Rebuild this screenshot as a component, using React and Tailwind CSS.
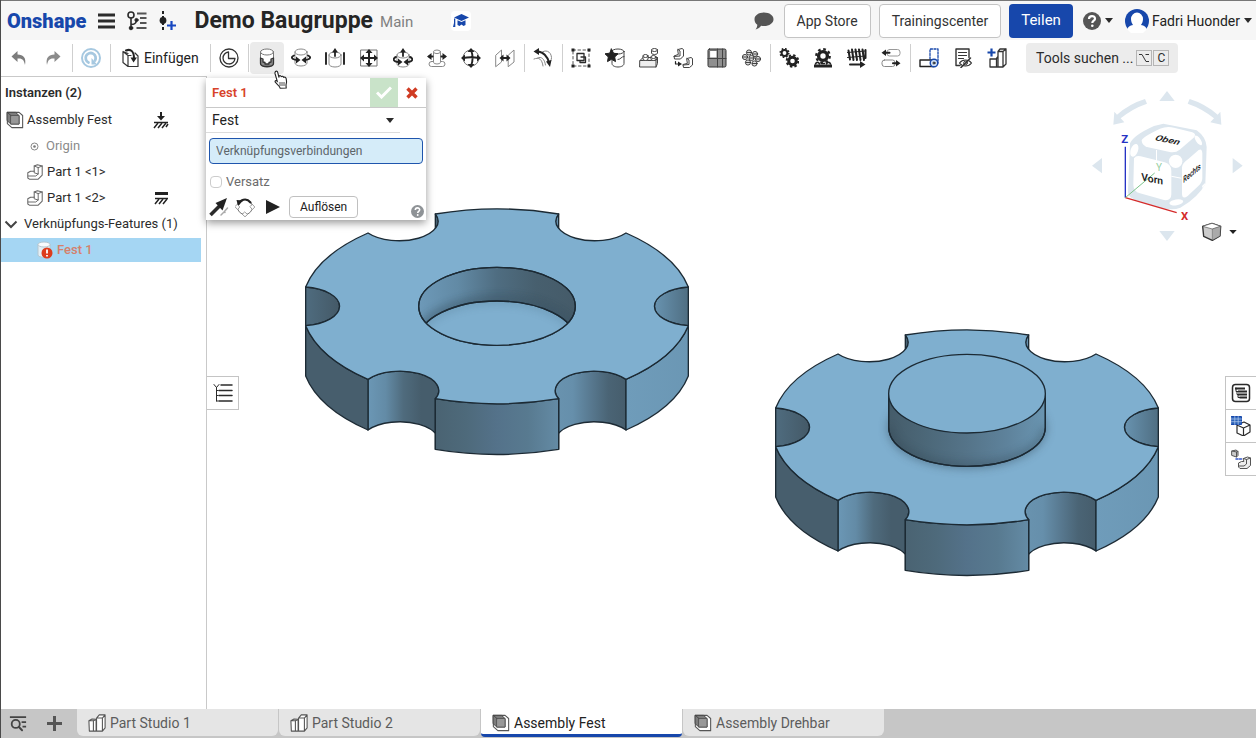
import React from "react";

function Svg({ size = 20, children, label, className = "" }) {
  return (
    <svg
      width={size}
      height={size}
      viewBox="0 0 20 20"
      fill="none"
      stroke="#2b2b2b"
      strokeWidth="1"
      strokeLinecap="round"
      strokeLinejoin="round"
      className={"shrink-0 " + className}
      role={label ? "img" : undefined}
      aria-label={label}
      aria-hidden={label ? undefined : true}
    >
      {children}
    </svg>
  );
}

const Caret = () => (
  <svg width="8" height="5" viewBox="0 0 8 5" aria-hidden="true" className="shrink-0">
    <path d="M0 0h8L4 5z" fill="#2b2b2b" />
  </svg>
);

const dark = "#222222";
const blue = "#1747ab";

function Cylinder({ x = 3, y = 1, w = 14, h = 17, r = 3, stroke = "#8a8a8a", fill = "#fff" }) {
  return (
    <g stroke={stroke} fill={fill}>
      <path d={`M${x} ${y + r}v${h - 2 * r}a${w / 2} ${r} 0 0 0 ${w} 0v${-(h - 2 * r)}`} />
      <ellipse cx={x + w / 2} cy={y + r} rx={w / 2} ry={r} />
    </g>
  );
}

const icons = {
  undo: (
    <path d="M8.500 3L2.500 8.500l6 5.500v-3.500c5-.5 6.500 1.500 7.500 6.500 1.500-7-1.500-10.500-7.500-10.500z" fill="#7d7d7d" stroke="none" />
  ),
  redo: (
    <path d="M11.500 3l6 5.500-6 5.500v-3.500c-5-.5-6.500 1.500-7.500 6.500-1.500-7 1.500-10.500 7.500-10.500z" fill="#8b8b8b" stroke="none" />
  ),
  refresh: (
    <g stroke="#a6c8e0">
      <circle cx="10" cy="10" r="9" strokeWidth="2" />
      <path d="M7.500 14.500A5 5 0 1 1 14 12.500" strokeWidth="2.800" />
      <path d="M10.500 10v6.500h5.500z" fill="#a6c8e0" stroke="none" />
    </g>
  ),
  insert: (
    <g stroke="#333" strokeWidth="1.200">
      <path d="M8 5.500L3 3.500v11L8 18.500h10V8l-3-3M3 3.500l5 4v11M8 7.500h3" />
      <path d="M6 2.500c5-2 8 1 8 8" strokeWidth="2" stroke={dark} />
      <path d="M10.500 9.500h6.500L13.500 14.500z" fill={dark} stroke="none" />
    </g>
  ),
  clock: (
    <g stroke="#333" strokeWidth="1.300">
      <circle cx="10" cy="10" r="9" />
      <path d="M9.500 4a6 6 0 1 0 6.500 6.500H9.500z" />
    </g>
  ),
  fastened: (
    <g>
      <Cylinder x={3.500} y={1} w={13} h={18} stroke="#777" />
      <path d="M3.500 10v5.500c0 1.800 2.800 3 6.500 3s6.500-1.200 6.500-3V10l-2.500 1v3l-2 .5v1.500h-4v-1.500l-2-.5v-3z" fill="#8b8b8b" stroke="#333" strokeWidth="1.300" />
    </g>
  ),
  revolute: (
    <g>
      <Cylinder x={4} y={1} w={12} h={17} />
      <path d="M3 7.500C-.5 9 .5 11.500 6 12M17 7.500c3.500 1.500 2.500 4-3 4.500" stroke={dark} strokeWidth="1.900" />
      <path d="M5 8.500l4.500 3.500L5 15.500zM15 8.500L10.500 12l4.500 3.500z" fill={dark} stroke="none" />
    </g>
  ),
  slider: (
    <g>
      <Cylinder x={4} y={4} w={12} h={15} />
      <path d="M1 5v11M19 5v11" stroke={dark} strokeWidth="1.900" />
      <path d="M10 8V3" stroke={dark} strokeWidth="1.800" />
      <path d="M7 4.500L10 0l3 4.500z" fill={dark} stroke="none" />
    </g>
  ),
  planar: (
    <g>
      <rect x="2" y="2" width="16" height="16" stroke="#777" />
      <path d="M10 3v14M3 10h14" stroke={dark} strokeWidth="2" />
      <path d="M6.500 5L10 1l3.500 4zM6.500 15l3.500 4 3.500-4zM5 6.500L1 10l4 3.500zM15 6.500l4 3.500-4 3.500z" fill={dark} stroke="none" />
    </g>
  ),
  cylindrical: (
    <g>
      <Cylinder x={4} y={4} w={12} h={15} />
      <path d="M3 9C-1 10.500.5 14 5.500 14M17 9c4 1.500 2.500 5-2.500 5" stroke={dark} strokeWidth="1.900" />
      <path d="M5 10.500L9.500 14 5 17.500zM15 10.500L10.500 14l4.500 3.500zM7 4.500L10 0l3 4.500z" fill={dark} stroke="none" />
      <path d="M10 8V3" stroke={dark} strokeWidth="1.800" />
    </g>
  ),
  pinslot: (
    <g>
      <rect x="2" y="13.500" width="16" height="5" rx="2.500" stroke="#888" fill="#fff" />
      <Cylinder x={6.500} y={2} w={7} h={14} r={1.800} />
      <path d="M5.500 8.500H2.500M14.500 8.500h3" stroke={dark} strokeWidth="2" />
      <path d="M4.500 5l-4.500 3.500L4.500 12zM15.500 5l4.500 3.500-4.500 3.500z" fill={dark} stroke="none" />
    </g>
  ),
  ball: (
    <g>
      <circle cx="10" cy="10" r="8" stroke="#777" />
      <path d="M10 2c2 5 2 11 0 16M2 10c5-1 11-1 16 0" stroke={dark} strokeWidth="1.900" />
      <path d="M6.500 4L10 0l3.500 4zM6.500 16l3.500 4 3.500-4zM4 6.500L0 10l4 3.500zM16 6.500l4 3.500-4 3.500z" fill={dark} stroke="none" />
    </g>
  ),
  parallel: (
    <g>
      <path d="M1 7l5.500-5v12L1 18.500zM13.500 7L19 2v12l-5.500 4.500z" stroke="#888" />
      <path d="M7 10h6" stroke={dark} strokeWidth="2" />
      <path d="M8.500 6.500L4.500 10l4 3.500zM11.500 6.500l4 3.500-4 3.500z" fill={dark} stroke="none" />
    </g>
  ),
  tangent: (
    <g>
      <path d="M1 11c5-2 8 0 9 7M8 5c4-4 10-2 10.500 4.500 0 3-1.500 4.500-2.500 5M4.500 10c4-2 7 1 8 7" stroke="#888" />
      <path d="M4.500 3.500c5.500 0 10 5 11.500 11" stroke={dark} strokeWidth="2" />
      <path d="M6 0L.5 3.500 6 7zM13 13.500l4 5.500 1.500-7z" fill={dark} stroke="none" />
    </g>
  ),
  group: (
    <g>
      <rect x="2" y="2" width="16" height="16" strokeDasharray="2.500 2.500" stroke="#555" />
      <path d="M6 5.500h7v7H6zM10 9h4.500v5.500H9v-2" strokeWidth="1.300" />
      <path d="M.5.500h3v3h-3zM16.500.500h3v3h-3zM.5 16.500h3v3h-3zM16.500 16.500h3v3h-3z" fill={dark} stroke="none" />
    </g>
  ),
  mateConnector: (
    <g>
      <path d="M7 3.500v12c0 2 2.500 3.500 6 3.500s6-1.500 6-3.500v-12" stroke="#444" />
      <ellipse cx="13" cy="3.500" rx="6" ry="2.500" stroke="#444" fill="#fff" />
      <path d="M19 8.500c-3 0-3 3-6 3" stroke="#444" />
      <path d="M6.500 1l2 4.200 4.500.6-3.300 3.200.8 4.600-4-2.300-4 2.300.8-4.600L0 5.800l4.500-.6z" fill={dark} stroke={dark} />
    </g>
  ),
  replicate: (
    <g stroke="#444">
      <path d="M1 12.500l3-3h14.500v6L17 19H1zM1 12.500h16V19M17 12.500l1.500-3" fill="#eee" />
      <Cylinder x={4} y={6.500} w={5} h={6} r={1.500} stroke="#444" />
      <Cylinder x={12.500} y={.5} w={6} h={6} r={1.500} stroke="#444" />
      <Cylinder x={12} y={7.500} w={5} h={5} r={1.500} stroke="#444" />
    </g>
  ),
  patternLinear: (
    <g stroke="#444">
      <path d="M5 1.500L9 .5l1.500 1v6.500l-3 3H1.500l-.5-3L5 6.500z" fill="#fff" />
      <path d="M14 10.500l4-1 1.500 1V17l-3 2.500h-6l-.5-3 4-1z" fill="#fff" />
      <path d="M5 1.500l2 1.500v5l-6 .5M14 10.500l2 1.500v4.500l-6 .5" />
      <path d="M2.500 13.500v2.500h3" strokeWidth="1.200" stroke={dark} />
      <path d="M5 13.500l4 2.500-4 2.500z" fill={dark} stroke="none" />
    </g>
  ),
  layout: (
    <g stroke="#333">
      <rect x="1" y="1" width="18" height="18" rx="1.500" fill="#8f8f8f" />
      <rect x="3" y="2.500" width="7" height="7.500" fill="#fff" stroke="#777" />
      <path d="M10.500 1v18M1 10.500h18M15.500 1v18" stroke="#444" />
    </g>
  ),
  pattern: (
    <g stroke="#333" fill="#ddd" strokeWidth=".9">
      {[[8, 4.500], [14, 6], [4, 9], [10.500, 10], [17, 11], [7, 14.500], [13.500, 15.500]].map(([x, y]) => (
        <g key={x}>
          <circle cx={x} cy={y} r="2.600" />
          <path d={`M${x - 2} ${y}h4`} />
        </g>
      ))}
    </g>
  ),
  gears: (
    <g>
      <circle cx="5.500" cy="5" r="2.900" strokeWidth="2" stroke={dark} />
      <circle cx="5.500" cy="5" r="4.300" strokeWidth="1.600" strokeDasharray="1.600 1.780" strokeLinecap="butt" stroke={dark} />
      <circle cx="13.500" cy="13" r="3.800" strokeWidth="3" stroke={dark} />
      <circle cx="13.500" cy="13" r="5.800" strokeWidth="2" strokeDasharray="2.400 2.150" strokeLinecap="butt" stroke={dark} />
    </g>
  ),
  rack: (
    <g stroke={dark}>
      <circle cx="10" cy="8" r="4.400" strokeWidth="3.400" />
      <circle cx="10" cy="8" r="6.800" strokeWidth="2.200" strokeDasharray="2.700 2.640" strokeLinecap="butt" />
      <path d="M1 18h18" strokeWidth="3" strokeLinecap="butt" />
      <path d="M2.500 16l1-1.500h2l1 1.500M13.500 16l1-1.500h2l1 1.500M8.500 15.500h3" strokeWidth="1.500" />
    </g>
  ),
  screw: (
    <g stroke={dark}>
      <path d="M1.500 2.500l1.500 9M5 1.500l1.500 10.500M8.500 1.500L10 12M12 1.500L13.500 12M15.500 1.500L17 12M18.500 2v8" strokeWidth="2" />
      <path d="M.5 4.500l18-1.500M.5 9.500l18-1.500" />
      <path d="M3 16.500h11" strokeWidth="2" />
      <path d="M13 13l5.500 3.500-5.500 3.500z" fill={dark} stroke="none" />
    </g>
  ),
  linear: (
    <g>
      <rect x="6" y="1.500" width="13" height="6.500" rx="2.500" stroke="#999" />
      <rect x="1" y="12" width="13" height="6.500" rx="2.500" stroke="#888" />
      <path d="M4 4.800h4.500M12 15.200h4" stroke={dark} strokeWidth="2" />
      <path d="M5 1.500L.5 4.800 5 8zM15 12l4.500 3.200L15 18.500z" fill={dark} stroke="none" />
    </g>
  ),
  section: (
    <g>
      <path d="M11 11V1h8v14" stroke={blue} strokeDasharray="2 1.500" strokeWidth="1.300" />
      <path d="M1 12h14v6.500H1z" stroke="#222" strokeWidth="1.400" />
      <circle cx="15" cy="15" r="3.800" fill="#cfe0f7" stroke={blue} strokeWidth="1.400" />
      <circle cx="15" cy="15" r="1" stroke={dark} />
    </g>
  ),
  hide: (
    <g stroke="#333">
      <path d="M7 17.500H3V1h13v8.500" strokeWidth="1.400" />
      <path d="M5.500 4.500h8M5.500 7.500h8M5.500 10.500h5" strokeWidth="1.200" />
      <path d="M6.500 15c3-4 9-4 12 0-3 4-9 4-12 0z" fill="#fff" strokeWidth="1.200" />
      <circle cx="12.500" cy="15" r="1.800" />
      <path d="M8 19.500l9.500-9.500" strokeWidth="1.500" />
    </g>
  ),
  addPart: (
    <g stroke="#333">
      <path d="M3 11v8h6.500v-8.500L11 8.500V7M9.500 19H11M11 19V3.500L13 1h6v15l-3 3zM11 3.500h5V19M16 3.500L19 1M3 11h6.500" strokeWidth="1.300" />
      <path d="M4.500.5v8M.5 4.500h8" stroke={blue} strokeWidth="2.200" strokeLinecap="butt" />
    </g>
  ),
};

const TOOL_GROUPS = [
  [["clock", "Zeit"]],
  [
    ["fastened", "Fest"],
    ["revolute", "Drehbar"],
    ["slider", "Schieber"],
    ["planar", "Planar"],
    ["cylindrical", "Zylindrisch"],
    ["pinslot", "Stift in Nut"],
    ["ball", "Kugel"],
    ["parallel", "Parallel"],
  ],
  [["tangent", "Tangential"]],
  [
    ["group", "Gruppe"],
    ["mateConnector", "Verknüpfungsverbindung"],
    ["replicate", "Replizieren"],
    ["patternLinear", "Lineares Muster"],
    ["layout", "Anordnung"],
    ["pattern", "Kreismuster"],
  ],
  [
    ["gears", "Zahnrad"],
    ["rack", "Zahnstange"],
    ["screw", "Schraube"],
    ["linear", "Lineare Beziehung"],
  ],
  [
    ["section", "Schnittansicht"],
    ["hide", "Ausblenden"],
    ["addPart", "Teil hinzufügen"],
  ],
];

const Separator = () => (
  <div className="flex h-7 w-1 shrink-0 justify-center">
    <div className="w-px bg-[#cfcfcf]" />
  </div>
);

function ToolButton({ icon, label, active }) {
  return (
    <button
      type="button"
      aria-label={label}
      className={
        active
          ? "flex h-8 w-[34px] shrink-0 items-center justify-center rounded bg-[#ebebeb]"
          : "flex h-8 w-[34px] shrink-0 items-center justify-center rounded"
      }
    >
      <Svg>{icons[icon]}</Svg>
    </button>
  );
}

function Header() {
  return (
    <header className="flex h-10 shrink-0 items-center border-t border-[#777] bg-[#f6f6f6] pr-1 pl-1.5">
      <a href="#home" className="text-[20px] leading-6 font-black text-[#1747ab]">
        Onshape
      </a>
      <button type="button" aria-label="Menü" className="ml-3">
        <svg width="17" height="16" viewBox="0 0 17 16" aria-hidden="true">
          <path d="M0 2h17M0 8h17M0 14h17" stroke="#2b2b2b" strokeWidth="3" />
        </svg>
      </button>
      <button type="button" aria-label="Versionen" className="ml-3">
        <Svg size={20}>
          <circle cx="4" cy="4" r="3" strokeWidth="1.600" />
          <path d="M4 7v9M4 13.500c5 0 5-2 5.500-4" strokeWidth="1.600" />
          <circle cx="4" cy="17" r="1.800" fill={dark} />
          <circle cx="9.500" cy="9" r="1.600" fill={dark} />
          <path d="M10 2.500h9.500M13 7h6.500M13 12h6.500M9.500 17h10" strokeWidth="1.900" stroke="#555" strokeLinecap="butt" />
        </Svg>
      </button>
      <button type="button" aria-label="Version erstellen" className="ml-3">
        <svg width="17" height="20" viewBox="0 0 17 20" aria-hidden="true">
          <path d="M4 0v3M4 5v2M4 12v2M4 16v3" stroke={dark} strokeWidth="2" />
          <circle cx="4" cy="9.500" r="3.400" fill={dark} />
          <path d="M12.500 10v9M8 14.500h9" stroke="#1747c0" strokeWidth="2.200" />
        </svg>
      </button>
      <h1 className="ml-[18px] text-[23px] leading-7 font-bold whitespace-nowrap text-[#252525]">Demo Baugruppe</h1>
      <span className="mt-1 ml-[7px] text-[15px] text-[#808080]">Main</span>
      <button type="button" aria-label="Lernzentrum" className="ml-[38px] rounded bg-white p-0.5">
        <svg width="16" height="16" viewBox="0 0 16 16" aria-hidden="true" fill={blue}>
          <path d="M8.500 1L16 4.500 8.500 8 1 4.500zM4.500 7.200l4 1.900 4-1.900V12l-2 1-2-1.500L6.500 13l-2-1zM1 5.500h1.300V14H0l1-4z" />
        </svg>
      </button>
      <div className="ml-auto flex items-center">
        <button type="button" aria-label="Kommentare" className="mr-2.5">
          <svg width="20" height="18" viewBox="0 0 20 18" aria-hidden="true" fill="#555">
            <path d="M10 .5c5.400 0 9.500 2.900 9.500 6.700S15.400 14 10 14c-1 0-2 0-2.900-.3C5.500 15.800 3.500 17 1.500 17.500c1.200-1.400 1.800-3 1.800-4.800C1.500 11.400.5 9.500.5 7.200.5 3.400 4.600.5 10 .5z" />
          </svg>
        </button>
        <button type="button" className="h-[34px] rounded border border-[#c4c4c4] bg-white px-3 text-sm text-[#333]">App Store</button>
        <button type="button" className="ml-2 h-[34px] rounded border border-[#c4c4c4] bg-white px-3 text-sm text-[#333]">Trainingscenter</button>
        <button type="button" className="ml-2 h-[34px] rounded bg-[#1747ab] px-3 text-[15px] text-white">Teilen</button>
        <button type="button" aria-label="Hilfe" className="ml-2.5 flex items-center gap-1">
          <svg width="18" height="18" viewBox="0 0 18 18" aria-hidden="true">
            <circle cx="9" cy="9" r="9" fill="#555" />
            <path d="M6 7c0-4 6-3.800 6-.3 0 2-2.700 2-2.700 4.300" fill="none" stroke="#fff" strokeWidth="2.200" />
            <circle cx="9.300" cy="13.800" r="1.300" fill="#fff" />
          </svg>
          <Caret />
        </button>
        <button type="button" className="ml-3 flex items-center text-sm whitespace-nowrap text-[#222]">
          <svg width="24" height="24" viewBox="0 0 24 24" aria-hidden="true" className="mr-[3px]">
            <circle cx="12" cy="12" r="12" fill={blue} />
            <path d="M12 3.500a6 6.500 0 0 1 6 6.500c0 2.500-1 4.500-2 6 3 .5 5.500 2 5.500 4.500L17 25H7l-4.500-4.500c0-2.500 2.500-4 5.500-4.500-1-1.500-2-3.500-2-6A6 6.500 0 0 1 12 3.500z" fill="#fff" />
          </svg>
          <span className="mr-1">Fadri Huonder</span>
          <Caret />
        </button>
      </div>
    </header>
  );
}

function Toolbar() {
  return (
    <nav aria-label="Werkzeuge" className="flex h-9 shrink-0 items-center bg-white pl-px">
      <ToolButton icon="undo" label="Rückgängig" />
      <ToolButton icon="redo" label="Wiederholen" />
      <Separator />
      <ToolButton icon="refresh" label="Aktualisieren" />
      <Separator />
      <button type="button" className="flex h-8 w-24 shrink-0 items-center gap-1 pl-2 text-sm text-[#222]">
        <Svg>{icons.insert}</Svg>
        Einfügen
      </button>
      {TOOL_GROUPS.map((group) => (
        <React.Fragment key={group[0][0]}>
          <Separator />
          {group.map(([icon, label]) => (
            <ToolButton key={icon} icon={icon} label={label} active={icon === "fastened"} />
          ))}
        </React.Fragment>
      ))}
      <button type="button" className="ml-3 flex h-[30px] w-[152px] shrink-0 items-center rounded bg-[#ececec] pl-2.5 text-sm whitespace-nowrap text-[#2b2b2b]">
        Tools suchen ...
        <kbd className="ml-[3px] flex size-4 items-center justify-center border border-[#b5b5b5]">
          <svg width="10" height="10" viewBox="0 0 10 10" fill="none" stroke="#333" aria-label="Wahltaste" role="img">
            <path d="M0 1.500h3l4 7h3M6.500 1.500H10" />
          </svg>
        </kbd>
        <kbd className="ml-px flex size-4 items-center justify-center border border-[#b5b5b5] font-[Roboto] text-xs">C</kbd>
      </button>
    </nav>
  );
}

function AssemblyIcon({ size = 18 }) {
  return (
    <Svg size={size}>
      <path d="M1.500 1.500h13l4 3.500v13.500h-12l-5-4.500z" fill="#fff" stroke="#555" strokeWidth="1.200" />
      <path d="M1.500 1.500h9L14.500 5v9.500h-9l-4-3.500z" fill="#7c7c7c" stroke="#444" />
      <path d="M5.500 5h9v9.500h-9z" fill="#989898" stroke="#555" />
      <path d="M1.500 1.500l4 3.500" stroke="#444" />
    </Svg>
  );
}

const PartIcon = () => (
  <Svg size={16}>
    <path d="M9 2.500L13 1l6 1.500V14l-5 5H3l-2-1.500V11l3.500-2H9z" fill="#fff" stroke="#666" strokeWidth="1.300" />
    <path d="M9 2.500l5 2v8L11 15H1.500M14 4.500l5-2M14 12.500l-5-1.500V9" stroke="#666" strokeWidth="1.200" />
  </Svg>
);

const Hatching = ({ fixed }) => (
  <svg width="16" height="18" viewBox="0 0 16 18" aria-hidden="true" fill="none" stroke={dark}>
    {fixed ? (
      <path d="M2 4.500h13" strokeWidth="3" />
    ) : (
      <g>
        <path d="M8 1v5" strokeWidth="2" />
        <path d="M4 5h8L8 9.500z" fill={dark} stroke="none" />
      </g>
    )}
    <path d={fixed ? "M2 9.500h13" : "M1 11.500h14"} strokeWidth="1.500" />
    <path d={fixed ? "M2 15l4-5M6 15l4-5M10 15l4-5" : "M1 17l4-5M5 17l4-5M9 17l4-5M13 16l2-3"} strokeWidth="1.500" />
  </svg>
);

function Sidebar() {
  const row = "flex h-[26px] items-center";
  return (
    <aside className="flex w-[206px] shrink-0 flex-col border-t border-r border-[#c9c9c9] bg-white pt-0.5 text-[13px] text-[#2b2b2b]">
      <h2 className="flex h-7 items-center pl-1 font-semibold">Instanzen (2)</h2>
      <ul>
        <li className={row + " justify-between pr-[37px] pl-[5px]"}>
          <span className="flex items-center gap-[3px]"><AssemblyIcon />Assembly Fest</span>
          <Hatching />
        </li>
        <li className={row + " gap-[7px] pl-[29px] text-[#8b8b8b]"}>
          <svg width="9" height="9" viewBox="0 0 9 9" aria-hidden="true" fill="none" stroke="#888">
            <circle cx="4.500" cy="4.500" r="3.500" />
            <circle cx="4.500" cy="4.500" r="1.300" fill="#777" stroke="none" />
          </svg>
          Origin
        </li>
        <li className={row + " gap-1 pl-[26px]"}><PartIcon />Part 1 &lt;1&gt;</li>
        <li className={row + " justify-between pr-[37px] pl-[26px]"}>
          <span className="flex items-center gap-1"><PartIcon />Part 1 &lt;2&gt;</span>
          <Hatching fixed />
        </li>
      </ul>
      <button type="button" className={row + " gap-1.5 pl-[3px]"}>
        <svg width="14" height="9" viewBox="0 0 14 9" aria-hidden="true" fill="none" stroke="#444" strokeWidth="2">
          <path d="M1.500 1.500L7 7l5.500-5.500" />
        </svg>
        Verknüpfungs-Features (1)
      </button>
      <ul className="pt-px">
        <li className="mr-[5px] flex h-6 items-center gap-1 bg-[#a5d6f3] pl-9 font-medium text-[#d5806b]">
          <svg width="16" height="18" viewBox="0 0 16 18" aria-hidden="true">
            <path d="M1 3v11c0 3 12 3 12 0V3" fill="#e4eff5" stroke="#b5c6cf" />
            <ellipse cx="7" cy="3.500" rx="6" ry="2.500" fill="#f8fbfd" stroke="#b5c6cf" />
            <circle cx="10" cy="12" r="5.500" fill="#dd3c1c" />
            <path d="M10 8.500v4M10 14v1.500" stroke="#fff" strokeWidth="1.800" />
          </svg>
          Fest 1
        </li>
      </ul>
    </aside>
  );
}

const TOP_FACE =
  "M421 42A585 292.500 0 0 1 791 42A117 58.500 0 0 0 993 99A585 292.500 0 0 1 1180 261A117 58.500 0 0 0 1180 377A585 292.500 0 0 1 993 538A117 58.500 0 0 0 791 596A585 292.500 0 0 1 421 596A117 58.500 0 0 0 219 538A585 292.500 0 0 1 32 377A117 58.500 0 0 0 32 261A585 292.500 0 0 1 219 99A117 58.500 0 0 0 421 42Z";

function Gear({ id, boss, className }) {
  const grad = (name, stops) => (
    <linearGradient id={id + name}>
      {stops.map((c, i) => (
        <stop key={i} offset={i / (stops.length - 1)} stopColor={c} />
      ))}
    </linearGradient>
  );
  const url = (name) => `url(#${id}${name})`;
  return (
    <svg width="400" height="265" viewBox="0 0 1200 795" className={className} role="img" aria-label={boss ? "Part 1 <2>" : "Part 1 <1>"}>
      <defs>
        {grad("nl", ["#6b97b5", "#638ba6", "#4f6b7d", "#465d6c", "#465d6c"])}
        {grad("nr", ["#6993af", "#668fab", "#587990", "#4a6475", "#465d6c"])}
        {grad("front", ["#4a6372", "#4e6a7b", "#54728a", "#587a90", "#648ba5"])}
        {grad("right", ["#6f9cba", "#6b97b4"])}
        {grad("pl", ["#4f6c7f", "#445967"])}
        {grad("pr", ["#6893b0", "#4f6e82"])}
        {grad("hole", ["#6d99b8", "#628aa5", "#4f6d81", "#475f6e", "#455b69"])}
        {grad("boss", ["#455c6a", "#4c6879", "#557489", "#5e829b", "#6a95b1"])}
        <clipPath id={id + "clip"}><ellipse cx="606" cy="319" rx="235" ry="117" /></clipPath>
        <clipPath id={id + "face"}><path d={TOP_FACE} /></clipPath>
        <clipPath id={id + "bossclip"}><path d="M371 218V319A235 117 0 0 0 841 319V218A235 117 0 0 1 371 218Z" /></clipPath>
        <filter id={id + "soft"} x="-20%" y="-30%" width="140%" height="160%"><feGaussianBlur stdDeviation="13" /></filter>
      </defs>
      <g stroke="#1c2a34" strokeWidth="4" strokeLinejoin="round">
        <path d="M421 42A117 58.500 0 0 1 421 88Z" fill="#4a6475" />
        <path d="M791 42A117 58.500 0 0 0 791 88Z" fill="#6790ad" />
        <path d="M32 261A117 58.500 0 0 1 32 377Z" fill={url("pl")} />
        <path d="M1180 261A117 58.500 0 0 0 1180 377Z" fill={url("pr")} />
        <path d="M219 538A117 58.500 0 0 1 421 596V748A117 58.500 0 0 0 219 690Z" fill={url("nl")} />
        <path d="M993 538A117 58.500 0 0 0 791 596V748A117 58.500 0 0 1 993 690Z" fill={url("nr")} />
        <path d="M32 377A585 292.500 0 0 0 219 538V690A585 292.500 0 0 1 32 528Z" fill="#475e6d" />
        <path d="M1180 377A585 292.500 0 0 1 993 538V690A585 292.500 0 0 0 1180 528Z" fill={url("right")} />
        <path d="M421 596A585 292.500 0 0 0 791 596V748A585 292.500 0 0 1 421 748Z" fill={url("front")} />
        <path d={TOP_FACE} fill="#7fafcf" />
        {boss ? (
          <g>
            <g clipPath={url("face")}>
              <ellipse cx="606" cy="322" rx="240" ry="122" fill="#3d5769" opacity="0.500" stroke="none" filter={url("soft")} />
            </g>
            <path d="M371 218V319A235 117 0 0 0 841 319V218Z" fill={url("boss")} />
            <g clipPath={url("bossclip")}>
              <path d="M371 319A235 117 0 0 0 841 319" fill="none" stroke="#2f4351" strokeWidth="26" opacity="0.350" filter={url("soft")} />
            </g>
            <path d="M371 218V319A235 117 0 0 0 841 319V218" fill="none" />
            <ellipse cx="606" cy="218" rx="235" ry="118" fill="#7fafcf" />
          </g>
        ) : (
          <g>
            <ellipse cx="606" cy="319" rx="235" ry="117" fill={url("hole")} />
            <g clipPath={url("clip")}>
              <ellipse cx="606" cy="420" rx="235" ry="117" fill="none" stroke="#2f4351" strokeWidth="30" opacity="0.350" filter={url("soft")} />
              <ellipse cx="606" cy="420" rx="235" ry="117" fill="#7fafcf" />
              <path d="M371 420A235 117 0 0 1 841 420" fill="none" stroke="#4a6a80" strokeWidth="16" opacity="0.350" filter={url("soft")} />
              <ellipse cx="606" cy="420" rx="235" ry="117" fill="none" />
            </g>
            <ellipse cx="606" cy="319" rx="235" ry="117" fill="none" />
          </g>
        )}
      </g>
    </svg>
  );
}

function ViewCube() {
  return (
    <svg width="176" height="170" viewBox="0 0 528 510" className="absolute top-1 right-0" role="img" aria-label="Ansichtswürfel">
      <g fill="#dce6ee">
        <path d="M261 33l23 30h-46zM261 483l23-30h-46zM36 257l30-23v46zM488 257l-30-23v46z" />
        <path d="M100 134l3-39 8 9q38-33 84-47l6 14q-44 15-79 44l11 12zM424 134l-3-39-8 9q-38-33-84-47l-6 14q44 15 79 44l-11 12z" />
        <path d="M150 190q10-24 72-52l28-7 100 20q28 20 30 50l-4 110q-20 40-75 72-20 8-55 2l-80-25q-25-10-22-30z" />
      </g>
      <g fill="#fff">
        <path d="M185 182q0-10 55-36 20-8 42-3l55 14q14 6 4 16l-42 36q-12 10-30 7l-65-14q-18-6-19-20z" />
        <path d="M162 235q6-10 20-6l72 18q20 6 20 26v70q0 20-22 17l-72-20q-20-6-20-26z" />
        <path d="M306 262q0-12 18-24l32-28q10-6 11 10v74q0 14-12 24l-32 30q-16 12-17-6z" />
        <circle cx="287" cy="244" r="20" />
        <ellipse cx="163" cy="211" rx="11" ry="20" transform="rotate(20 163 211)" />
        <ellipse cx="289" cy="367" rx="21" ry="9" transform="rotate(-10 289 367)" />
        <ellipse cx="355" cy="181" rx="7" ry="17" transform="rotate(-35 355 181)" />
        <path d="M228 210h3v34h-3zM274 287l30 6v3l-30-6zM366 318l10-10v4l-8 12z" />
      </g>
      <g fill="none" strokeWidth="4">
        <path d="M136 353V200" stroke="#2633c4" />
        <path d="M136 353l154 45" stroke="#d42a2a" />
        <path d="M136 353l88-74" stroke="#7cc48b" strokeWidth="3" />
      </g>
      <g fontFamily="Roboto, sans-serif" fontWeight="600" fill="#222">
        <text x="124" y="189" fontSize="34" fontWeight="700" fill="#2633c4">Z</text>
        <text x="303" y="420" fontSize="34" fontWeight="700" fill="#d42a2a">X</text>
        <text x="228" y="274" fontSize="30" fontWeight="400" fill="#98cfa4">Y</text>
        <text transform="matrix(1 .2 0 1 184 301)" fontSize="31">Vorn</text>
        <text transform="matrix(1 .2 -.5 .7 222 180)" fontSize="31">Oben</text>
        <text transform="matrix(.6 -.5 0 1 310 310)" fontSize="28">Rechts</text>
      </g>
      <g stroke="#333" strokeWidth="4" strokeLinejoin="round">
        <path d="M368 439l28-9 26 9-2 29-23 13-26-12z" fill="#ccc" />
        <path d="M368 439l28-9 26 9-25 8z" fill="#fff" stroke="#555" strokeWidth="2" />
        <path d="M397 447l25-8-2 29-23 13z" fill="#aaa" strokeWidth="1" />
      </g>
      <path d="M448 450h22l-11 12z" fill="#222" />
    </svg>
  );
}

function MateDialog() {
  return (
    <section aria-label="Fest 1" className="absolute top-0.5 -left-px w-[220px] bg-white shadow-[0_3px_8px_rgba(0,0,0,0.4)]">
      <div className="flex h-[30px] items-stretch border-b border-[#c9c9c9]">
        <h2 className="flex flex-1 items-center pl-1.5 text-[13px] font-semibold text-[#d8432a]">Fest 1</h2>
        <button type="button" aria-label="Übernehmen" className="flex w-7 items-center justify-center bg-[#c9e3c9]">
          <svg width="16" height="13" viewBox="0 0 16 13" fill="none" stroke="#fff" strokeWidth="3" aria-hidden="true">
            <path d="M1 6.500l4.500 4.500L15 1.500" />
          </svg>
        </button>
        <button type="button" aria-label="Abbrechen" className="flex w-7 items-center justify-center">
          <svg width="12" height="12" viewBox="0 0 12 12" stroke="#d03b23" strokeWidth="3.400" aria-hidden="true">
            <path d="M1.500 1.500l9 9M10.500 1.500l-9 9" />
          </svg>
        </button>
      </div>
      <div className="mr-[26px] grid items-center border-b border-[#dcdcdc]">
        <select aria-label="Verknüpfungstyp" defaultValue="Fest" className="col-start-1 row-start-1 h-6 appearance-none bg-transparent pl-1.5 text-sm text-[#222]">
          <option>Fest</option>
        </select>
        <span className="pointer-events-none col-start-1 row-start-1 mr-1.5 justify-self-end"><Caret /></span>
      </div>
      <div className="px-[3px] pt-[5px]">
        <input
          aria-label="Verknüpfungsverbindungen"
          placeholder="Verknüpfungsverbindungen"
          className="block h-[26px] w-full rounded-sm border border-[#1f55ad] bg-[#d5ecf9] px-1.5 text-xs text-[#333] placeholder:text-[#5d6569]"
        />
      </div>
      <label className="mt-2 flex h-5 items-center gap-1 pl-1 text-[13px] text-[#6b6b6b]">
        <input type="checkbox" className="size-3 appearance-none rounded-sm border border-[#ccc] bg-white" />
        Versatz
      </label>
      <div className="flex items-center pt-1 pr-0.5 pb-0.5 pl-[3px]">
        <button type="button" aria-label="Richtung umkehren">
          <Svg>
            <path d="M1.500 18L11 8.500" strokeWidth="3.500" strokeLinecap="butt" />
            <path d="M18 1L13.500 13.500 6.500 6z" fill={dark} stroke="none" />
            <path d="M12 18l3-3 3.500-4M15 15l1 .5" stroke="#aaa" strokeWidth="1.500" />
          </Svg>
        </button>
        <button type="button" aria-label="Sekundärachse drehen" className="ml-1.5">
          <Svg>
            <circle cx="10" cy="10" r="7.500" stroke="#777" />
            <path d="M3 8C5 3 11 0 15.500 5.500" stroke={dark} strokeWidth="2" />
            <path d="M1.500 3l6.500.5-5 5.500z" fill={dark} stroke="none" />
            <path d="M17.500 7.500l2.300 2.500-2.300 2.500-2.300-2.500zM10 15.200l2.500 2.300L10 19.800l-2.500-2.300zM2.500 7.500L4.800 10l-2.300 2.500L.2 10z" fill="#fff" stroke="#888" strokeWidth=".8" />
          </Svg>
        </button>
        <button type="button" aria-label="Animieren" className="ml-[11px]">
          <svg width="14" height="14" viewBox="0 0 14 14" aria-hidden="true"><path d="M0 0l14 7-14 7z" fill={dark} /></svg>
        </button>
        <button type="button" className="ml-[9px] h-[22px] rounded-sm border border-[#c0c0c0] px-2.5 text-xs text-[#222]">Auflösen</button>
        <button type="button" aria-label="Hilfe zum Dialog" className="mt-2 ml-auto">
          <svg width="13" height="13" viewBox="0 0 18 18" aria-hidden="true">
            <circle cx="9" cy="9" r="9" fill="#8e9296" />
            <path d="M6 7c0-4 6-3.800 6-.3 0 2-2.700 2-2.700 4.300" fill="none" stroke="#fff" strokeWidth="2.200" />
            <circle cx="9.300" cy="13.800" r="1.300" fill="#fff" />
          </svg>
        </button>
      </div>
    </section>
  );
}

const sideButton = "flex h-[33px] items-center justify-center border-b border-l border-[#c4c4c4] bg-white last:h-8 last:border-b-0";

function Viewport() {
  return (
    <main className="relative min-w-0 flex-1 bg-white">
      <Gear id="g1" className="absolute top-[124px] left-[88px]" />
      <Gear id="g2" boss className="absolute top-[245px] left-[558px]" />
      <ViewCube />
      <div className="absolute inset-x-0 top-1/2 -mt-4 flex -translate-y-px items-start justify-between">
        <button type="button" aria-label="Liste ein- und ausblenden" className="flex h-[34px] w-8 items-center justify-center border border-l-0 border-[#c4c4c4] bg-white">
          <Svg>
            <path d="M8 2h11M6 7.500h13M6 12.500h13M6 18h13" strokeWidth="1.500" />
            <path d="M1 1.500l2.500 3L6 1.500M3.500 4.500V18M3.500 7.500H5M3.500 12.500H5M3.500 18H5" />
          </Svg>
        </button>
        <div className="flex w-[31px] flex-col border-y border-[#c4c4c4]">
          <button type="button" aria-label="Stückliste" className={sideButton}>
            <Svg>
              <rect x="1.500" y="1.500" width="17" height="17" rx="3" strokeWidth="1.500" />
              <path d="M4 5.500H14M7 8.500H16M7 11.500H16M8.500 14.500H16" strokeWidth="2" strokeLinecap="butt" />
              <path d="M5 5v3.500h2M6 8.500v3h1M7 11.500v3h2" />
            </Svg>
          </button>
          <button type="button" aria-label="Konfigurationen" className={sideButton}>
            <Svg>
              <path d="M6 9l7-3 6 3v7l-6.500 4L6 17zM6 9l6.500 3L19 9M12.500 12v8" fill="#fff" strokeWidth="1.200" />
              <path d="M.5.500h10v8H.5z" fill="#2a62b8" stroke={blue} />
              <path d="M.5 3h10M.5 5.700h10M3.800.5v8M7.200.5v8" stroke="#b9d0f0" strokeWidth=".7" />
            </Svg>
          </button>
          <button type="button" aria-label="Verknüpfungen" className={sideButton}>
            <Svg>
              <path d="M1 2l4-1 2 1.500v4L5.500 8 1 6.500zM1 2l4.500 1L7 2.500M5.500 3v5" fill="#ccc" stroke="#555" />
              <path d="M12.500 9.500l4-1.500 3 1v7.500L16 19.500H9L7.500 18v-4l3-1.500h2z" fill="#eee" stroke="#555" />
              <path d="M12.500 9.500l3 1V15L13 17H7.500M15.500 10.500l4-1.500" stroke="#555" />
              <path d="M5 10h6" stroke="#3154c8" strokeDasharray="2 1.500" strokeWidth="1.500" />
            </Svg>
          </button>
        </div>
      </div>
      <MateDialog />
    </main>
  );
}

const StudioIcon = () => (
  <Svg size={18}>
    <path d="M1 7.500L4.500 5.500 9 6v13H1.500zM1 7.500h5V19M6 7.500L9 6M9.500 4.500L12.500 1H19v14.500L16 19H9.500zM9.500 4.500H16V19M16 4.500L19 1" fill="#fff" stroke="#555" strokeWidth="1.200" />
  </Svg>
);

const TABS = ["Part Studio 1", "Part Studio 2", "Assembly Fest", "Assembly Drehbar"];

function TabBar() {
  return (
    <footer className="flex h-[29px] shrink-0 items-start bg-[#c6c6c6]">
      <button type="button" aria-label="Tabs suchen" className="flex h-7 w-[34px] shrink-0 items-center justify-center">
        <Svg size={18}>
          <path d="M1 3.500h18M14 9h5M15 14h4" strokeWidth="2" stroke="#444" strokeLinecap="butt" />
          <circle cx="7.500" cy="11" r="4.500" strokeWidth="2" stroke="#444" />
          <path d="M11 14.500l3.500 3.500" strokeWidth="2.200" stroke="#444" />
        </Svg>
      </button>
      <button type="button" aria-label="Tab hinzufügen" className="mr-[3px] flex h-7 w-[39px] shrink-0 items-center justify-center">
        <svg width="15" height="15" viewBox="0 0 15 15" stroke="#555" strokeWidth="3" aria-hidden="true"><path d="M7.500 0v15M0 7.500h15" /></svg>
      </button>
      <div role="tablist" className="flex gap-px">
        {TABS.map((name) => {
          const active = name === "Assembly Fest";
          return (
            <button
              key={name}
              type="button"
              role="tab"
              aria-selected={active}
              className={
                active
                  ? "flex h-7 w-[201px] items-center gap-1 rounded-b border-b-3 border-[#1747ab] bg-white pt-0.5 pl-[11px] text-sm text-[#222]"
                  : "flex h-[27px] w-[201px] items-center gap-1 rounded-b-md bg-[#e5e5e5] pl-[11px] text-sm text-[#5c5c5c]"
              }
            >
              {name.startsWith("Part") ? <StudioIcon /> : <AssemblyIcon />}
              {name}
            </button>
          );
        })}
      </div>
    </footer>
  );
}

function Pointer() {
  return (
    <svg width="15" height="19" viewBox="0 0 15 19" className="pointer-events-none absolute top-[70px] left-[272px]" aria-hidden="true">
      <path
        d="M2.500 1.500c1-.8 2 0 2.200.8L6 7.500V6c1-.8 2-.3 2.300.6 1-.6 2-.2 2.300.7 1.200-.5 2.200 0 2.600 1.400.6 2.500.7 4-.2 6.300l.2 3-6 .2-.7-1.500-4.200-4.500C1.500 11 2.800 10 4.200 11.200L2 3.500c-.2-.8 0-1.500.5-2z"
        fill="#fff"
        stroke="#222"
        strokeWidth="1.100"
      />
      <path d="M7 12v4M9 12v4M11 12v4" stroke="#222" strokeWidth=".8" />
    </svg>
  );
}

export default function App() {
  return (
    <div className="relative flex min-h-screen flex-col overflow-hidden border-l border-[#4a4a4a] bg-white font-[Roboto,sans-serif]">
      <Header />
      <Toolbar />
      <div className="flex flex-1">
        <Sidebar />
        <Viewport />
      </div>
      <TabBar />
      <Pointer />
    </div>
  );
}
